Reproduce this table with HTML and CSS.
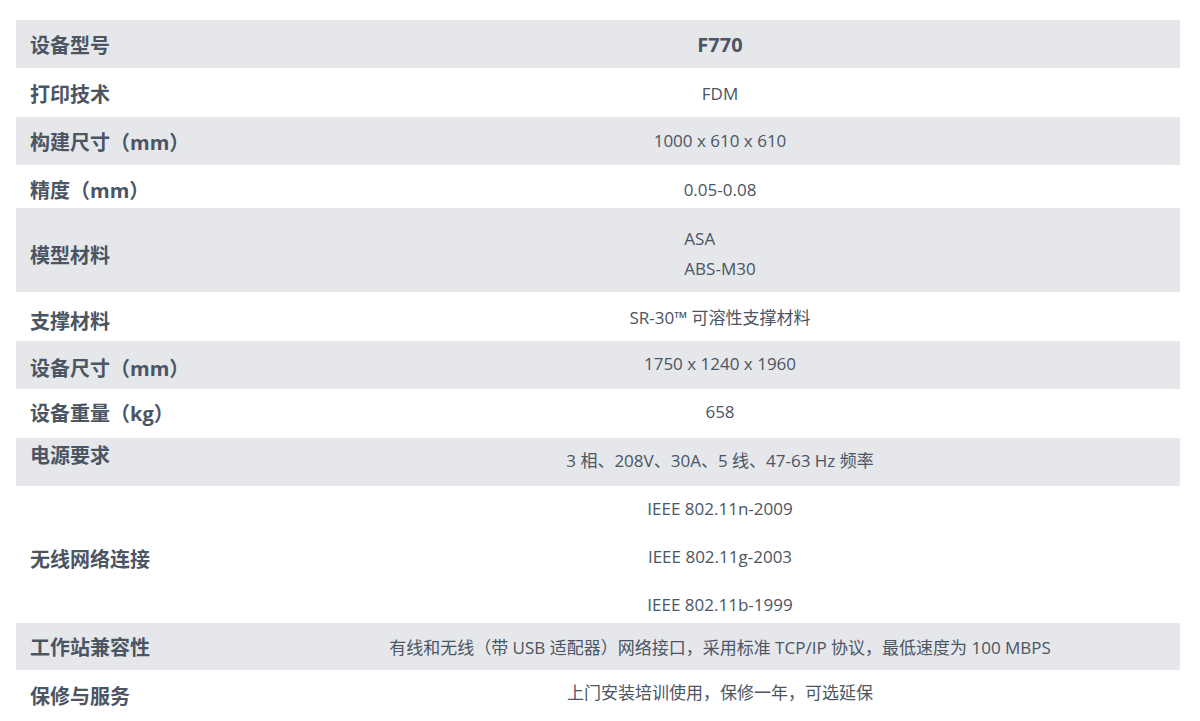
FILE: index.html
```html
<!DOCTYPE html>
<html lang="zh-CN">
<head>
<meta charset="utf-8">
<title>F770 参数</title>
<link rel="stylesheet" href="styles.css">
</head>
<body>
<table class="spec">
  <tbody>
    <tr class="row row--alt">
      <th class="label">设备型号</th>
      <td class="value value--strong">F770</td>
    </tr>
    <tr class="row">
      <th class="label">打印技术</th>
      <td class="value value--low">FDM</td>
    </tr>
    <tr class="row row--alt">
      <th class="label">构建尺寸（mm）</th>
      <td class="value">1000 x 610 x 610</td>
    </tr>
    <tr class="row row--short">
      <th class="label">精度（mm）</th>
      <td class="value">0.05-0.08</td>
    </tr>
    <tr class="row row--alt row--materials">
      <th class="label">模型材料</th>
      <td class="value">
        <ul class="mat-list">
          <li>ASA</li>
          <li>ABS-M30</li>
        </ul>
      </td>
    </tr>
    <tr class="row row--support">
      <th class="label">支撑材料</th>
      <td class="value">SR-30™ 可溶性支撑材料</td>
    </tr>
    <tr class="row row--alt row--size">
      <th class="label">设备尺寸（mm）</th>
      <td class="value value--high">1750 x 1240 x 1960</td>
    </tr>
    <tr class="row">
      <th class="label label--flat">设备重量（kg）</th>
      <td class="value value--high">658</td>
    </tr>
    <tr class="row row--alt">
      <th class="label label--top">电源要求</th>
      <td class="value value--high">3 相、208V、30A、5 线、47-63 Hz 频率</td>
    </tr>
    <tr class="row row--wifi">
      <th class="label">无线网络连接</th>
      <td class="value">
        <p class="wifi">IEEE 802.11n-2009</p>
        <p class="wifi">IEEE 802.11g-2003</p>
        <p class="wifi">IEEE 802.11b-1999</p>
      </td>
    </tr>
    <tr class="row row--alt row--tight">
      <th class="label">工作站兼容性</th>
      <td class="value value--low">有线和无线（带 USB 适配器）网络接口，采用标准 TCP/IP 协议，最低速度为 100 MBPS</td>
    </tr>
    <tr class="row row--last">
      <th class="label">保修与服务</th>
      <td class="value value--higher">上门安装培训使用，保修一年，可选延保</td>
    </tr>
  </tbody>
</table>
</body>
</html>
```

FILE: styles.css
```css
html, body {
  background: #ffffff;
}

body {
  margin: 20px 20px 0 16px;
  font-family: "Open Sans", "Noto Sans CJK SC", sans-serif;
  color: #4b5563;
}

.spec {
  width: 100%;
  border-collapse: collapse;
  border-spacing: 0;
  table-layout: fixed;
}

.row {
  height: 49px;
}

.row--alt {
  height: 48px;
  background: #e5e7eb;
}

.label {
  width: 230px;
  padding: 4px 0 0 14px;
  text-align: left;
  vertical-align: middle;
  font-weight: 700;
  font-size: 20px;
  line-height: 24px;
  color: #4b5563;
  white-space: nowrap;
}

.value {
  padding: 0;
  text-align: center;
  vertical-align: middle;
  font-size: 17px;
  line-height: 24px;
  color: #4b5563;
}

.value--strong {
  font-weight: 700;
  font-size: 20px;
  padding-top: 1px;
}

.value--low {
  padding-top: 3px;
}

.value--high {
  padding-bottom: 3px;
}

.value--higher {
  padding-bottom: 4px;
}

/* 精度 row */
.row--short {
  height: 43px;
}

.row--short .label {
  padding-top: 9px;
}

.row--short .value {
  padding-top: 6px;
}

/* 模型材料 row */
.row--materials {
  height: 84px;
}

.row--materials .label {
  padding-top: 12px;
}

.row--materials .value {
  padding-top: 7px;
}

.mat-list {
  display: inline-block;
  margin: 0;
  padding: 0;
  list-style: none;
  text-align: left;
  line-height: 30px;
}

/* 支撑材料 row */
.row--support .label {
  padding-top: 11px;
}

.row--support .value {
  padding-top: 2px;
}

/* 设备尺寸 row */
.row--size .label {
  padding-top: 8px;
}

.label--flat {
  padding-top: 0;
}

.label--top {
  vertical-align: top;
  padding-top: 6px;
}

/* 无线网络连接 row */
.row--wifi {
  height: 137px;
}

.row--wifi .label {
  padding-top: 11px;
}

.row--wifi .value {
  padding: 4px 0 0;
}

.wifi {
  margin: 0 0 24px;
  line-height: 24px;
}

.wifi:last-child {
  margin-bottom: 0;
}

/* 工作站兼容性 row */
.row--tight {
  height: 47px;
}

.row--tight .label {
  padding-top: 3px;
}

/* 保修与服务 row */
.row--last {
  height: 50px;
}

.row--last .label {
  padding-top: 3px;
}
```
